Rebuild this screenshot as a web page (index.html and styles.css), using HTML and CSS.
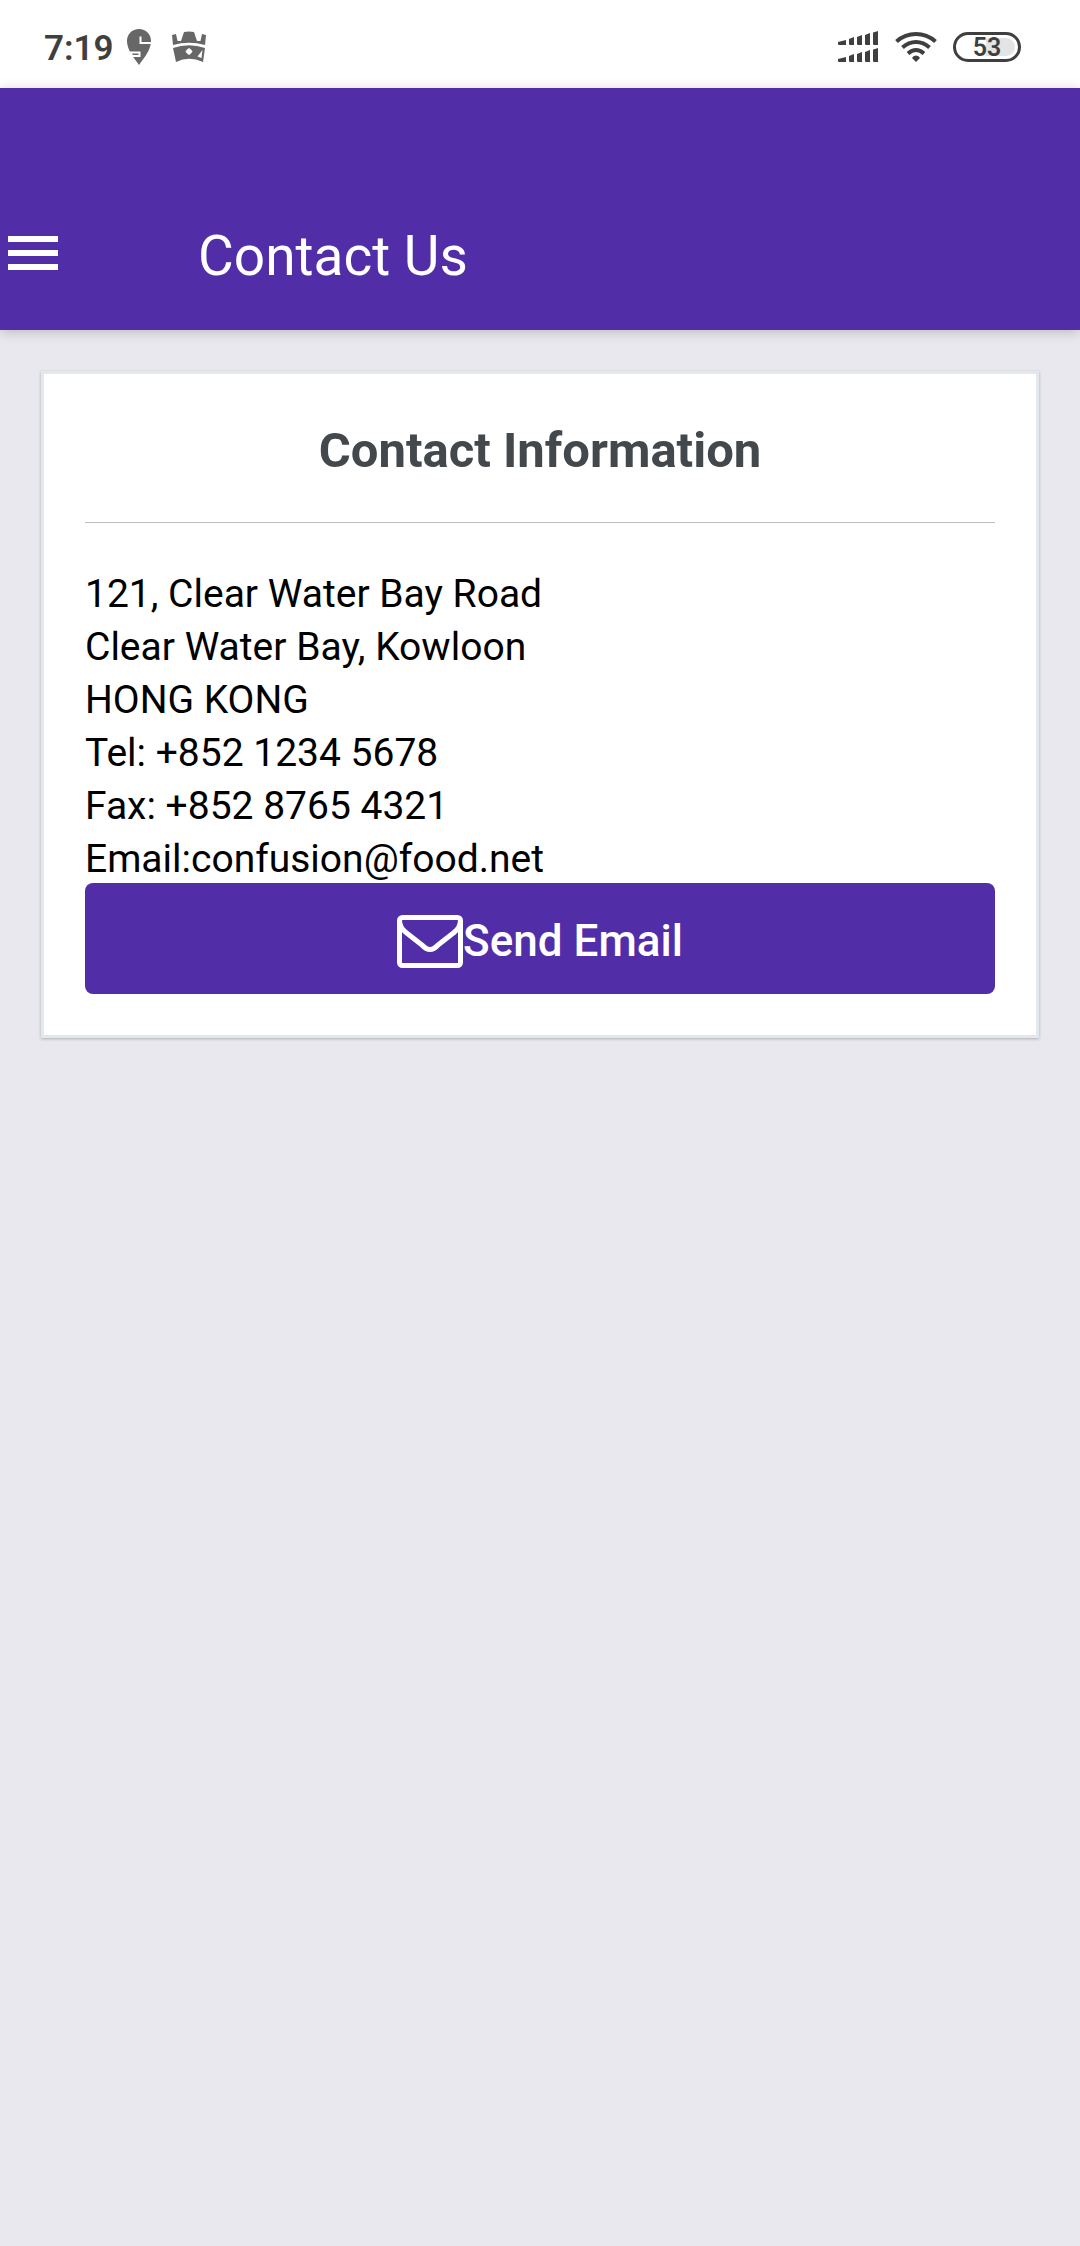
FILE: index.html
```html
<!DOCTYPE html>
<html lang="en">
<head>
<meta charset="utf-8">
<meta name="viewport" content="width=device-width, initial-scale=1">
<title>Contact Us</title>
<link rel="stylesheet" href="styles.css">
</head>
<body>
<div class="status-bar">
  <div class="status-left">
    <span class="time">7:19</span>
    <svg class="icon-pin" width="26" height="36" viewBox="0 0 26 36" aria-hidden="true">
      <path fill="#676767" d="M13 0C20 0 25 5 25 12C25 21 18 29 13 36C8 29 1 21 1 12C1 5 6 0 13 0Z"/>
      <path fill="none" stroke="#fff" stroke-width="2" d="M14.500 7.500V14H26M3 23.500H13.500V27H6"/>
      <path fill="#fff" d="M0 23H5L7.500 27H0Z"/>
    </svg>
    <svg class="icon-crown" width="34" height="32" viewBox="0 0 34 32" aria-hidden="true">
      <path fill="#676767" d="M0 4L4 3L5.500 10H9L12 1Q17 0 22 1L25 10H28.500L30 3L34 4L33 14Q17 9.500 1 14Z"/>
      <path fill="#676767" d="M1 17Q17 11.500 33 17L31 31Q17 24.500 4 31Z"/>
      <path fill="#fff" d="M17 17L19 18.500L20.500 20.500L19 22.500L17 24L15 22.500L13.500 20.500L15 18.500ZM30.500 19L29.500 27L25.500 25.500Z"/>
    </svg>
  </div>
  <div class="status-right">
    <svg width="41" height="32" viewBox="0 0 41 32" fill="#3f3f3f" aria-hidden="true">
      <path d="M0 11L8 9V14H1Q0 14 0 13ZM11 8L16 6V14H12Q11 14 11 13ZM19 6L24 4V14H20Q19 14 19 13ZM27 4L32 2V14H28Q27 14 27 13ZM35 2Q35 1 37 1L40 0V14H36Q35 14 35 13Z"/>
      <path d="M0 28L8 26V31H1Q0 31 0 30ZM11 25L16 23V31H12Q11 31 11 30ZM19 23L24 21V31H20Q19 31 19 30ZM27 21L32 19V31H28Q27 31 27 30ZM35 19Q35 18 37 18L40 17V31H36Q35 31 35 30Z"/>
    </svg>
    <svg width="42" height="32" viewBox="0 0 42 32" fill="none" stroke="#3f3f3f" stroke-width="4" aria-hidden="true">
      <path d="M1.500 10.500Q10 3 21 3T40.500 10.500M7.500 16.500Q13.500 11 21 11T34.500 16.500M13 22.500Q17 19 21 19T29 22.500"/>
      <path fill="#3f3f3f" stroke="none" d="M21 24.500Q24 24.500 25 27L21 31L17 27Q18 24.500 21 24.500Z"/>
    </svg>
    <span class="battery">53</span>
  </div>
</div>
<header class="app-bar">
  <button class="menu-button" type="button" aria-label="Open menu">
    <svg width="50" height="34" viewBox="0 0 50 34" fill="#fff" aria-hidden="true"><path d="M0 0H50V6H0ZM0 14H50V20H0ZM0 28H50V34H0Z"/></svg>
  </button>
  <h1 class="app-title">Contact Us</h1>
</header>
<main class="content">
  <section class="card">
    <h2 class="card-title">Contact Information</h2>
    <address class="address">
      121, Clear Water Bay Road<br>
      Clear Water Bay, Kowloon<br>
      HONG KONG<br>
      Tel: +852 1234 5678<br>
      Fax: +852 8765 4321<br>
      Email:confusion@food.net
    </address>
    <button class="email-button" type="button">
      <svg width="66" height="53" viewBox="0 0 66 53" fill="none" stroke="#fff" stroke-width="5" stroke-linejoin="round" aria-hidden="true">
        <rect x="2.500" y="2.500" width="61" height="48" rx="3"/>
        <path d="M2.500 5C2.500 11 5 14.500 9 17.500L25 30Q33 39 41 30L57 17.500C61 14.500 63.500 11 63.500 5"/>
      </svg>
      <span>Send Email</span>
    </button>
  </section>
</main>
</body>
</html>
```
FILE: styles.css
```css
* {
  box-sizing: border-box;
}

body {
  margin: 0;
  min-height: 100vh;
  background: #e9e8ee;
  color: #000;
  font-family: Roboto, "Liberation Sans", sans-serif;
}

button {
  border: 0;
  font: inherit;
  color: inherit;
}

svg {
  display: block;
  flex: none;
}

.status-bar {
  display: flex;
  align-items: center;
  justify-content: space-between;
  height: 88px;
  padding: 6px 59px 0 44px;
  background: #fff;
  color: #3f3f3f;
}

.status-left {
  display: flex;
  align-items: center;
}

.status-right {
  display: flex;
  align-items: center;
  gap: 16px;
}

.time {
  padding-top: 3px;
  font-size: 35px;
  font-weight: 600;
  line-height: 40px;
}

.icon-pin {
  margin-left: 12px;
}

.icon-crown {
  margin-left: 20px;
}

.battery {
  width: 68px;
  height: 30px;
  border: 3px solid #3f3f3f;
  border-radius: 15px;
  background: linear-gradient(90deg, transparent 48%, #e4e4e4 48%) content-box;
  padding: 3px;
  font-size: 25px;
  font-weight: 600;
  line-height: 19px;
  text-align: center;
}

.app-bar {
  position: relative;
  display: flex;
  align-items: center;
  gap: 140px;
  height: 242px;
  padding: 94px 0 0 8px;
  background: #512da8;
  color: #fff;
  box-shadow: 0 2px 12px rgba(0, 0, 0, 0.2);
}

.menu-button {
  padding: 0 0 6px;
  background: none;
}

.app-title {
  margin: 0;
  font-size: 55px;
  font-weight: 400;
  line-height: 64px;
}

.content {
  padding: 41px;
}

.card {
  padding: 41px;
  border: 3px solid #e1e8ee;
  background: #fff;
  box-shadow: 0 1px 3px rgba(0, 0, 0, 0.25);
}

.card-title {
  margin: 0 0 45px;
  padding-bottom: 35px;
  border-bottom: 1px solid #bdbdbf;
  color: #43484d;
  font-size: 49px;
  font-weight: 700;
  line-height: 72px;
  text-align: center;
}

/* The last line of the address sits tight against the button. */
.address {
  margin-bottom: -3px;
  font-size: 39px;
  font-style: normal;
  line-height: 53px;
}

.email-button {
  display: flex;
  align-items: center;
  justify-content: center;
  width: 100%;
  height: 111px;
  padding: 5px 0 0;
  border-radius: 8px;
  background: #512da8;
  color: #fff;
  font-size: 44px;
  font-weight: 500;
  line-height: 52px;
}
```
